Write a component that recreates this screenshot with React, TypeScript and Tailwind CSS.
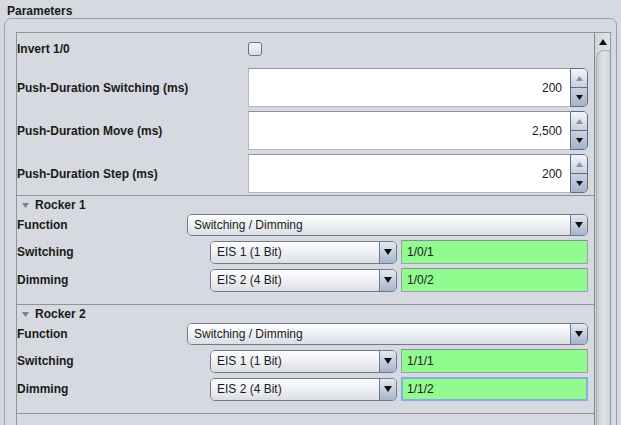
import React from 'react';

const font = { fontFamily: '"Liberation Sans", Arial, sans-serif' };

const Spinner: React.FC<{ value: string }> = ({ value }) => (
  <div className="flex h-[39px] w-[340px]">
    <div className="flex-1 flex items-center justify-end pr-[8px] bg-white border border-[#b3b8c0] border-t-[#8c929c] border-r-0 text-[12px] text-[#1a1a1a]">
      {value}
    </div>
    <div className="w-[18px] flex flex-col rounded-r-[5px] border border-[#5b6b85] overflow-hidden">
      <div className="flex-1 flex items-center justify-center bg-gradient-to-b from-[#f2f5f8] to-[#c7d1dd] border-b border-[#5b6b85]">
        <svg width="7" height="5" viewBox="0 0 7 5"><path d="M3.5 0L7 5H0z" fill="#8a93a0" /></svg>
      </div>
      <div className="flex-1 flex items-center justify-center bg-gradient-to-b from-[#c9d3df] to-[#a3b4ca]">
        <svg width="7" height="5" viewBox="0 0 7 5"><path d="M0 0H7L3.5 5z" fill="#111" /></svg>
      </div>
    </div>
  </div>
);

const Combo: React.FC<{ text: string; className: string }> = ({ text, className }) => (
  <div className={`flex rounded-[5px] border border-[#6f7a8c] overflow-hidden ${className}`}>
    <div className="flex-1 flex items-center pl-[6px] bg-gradient-to-b from-[#fdfdfd] via-[#eef0f3] to-[#dadde3] text-[12px] text-[#1a1a1a]">
      {text}
    </div>
    <div className="w-[17px] flex items-center justify-center border-l border-[#6f7a8c] bg-gradient-to-b from-[#e4eaf1] to-[#a4b5cb]">
      <svg width="8" height="6" viewBox="0 0 8 6"><path d="M0 0H8L4 6z" fill="#111" /></svg>
    </div>
  </div>
);

const Field: React.FC<{ text: string; focus?: boolean }> = ({ text, focus }) => (
  <div
    className={`w-[187px] h-[24px] flex items-center bg-[#92fb8f] text-[12px] text-[#1a1a1a] ${
      focus ? 'border-2 border-[#88acdb] pl-[4px]' : 'border border-[#9da2a9] border-t-[#8a8f97] pl-[5px]'
    }`}
  >
    {text}
  </div>
);

const Rocker: React.FC<{ name: string; sw: string; dim: string; focusLast?: boolean }> = ({ name, sw, dim, focusLast }) => (
  <div className="border-t border-[#8d929b] pb-[12px]">
    <div className="h-[18px] flex items-center pl-[5px] gap-[6px] text-[12px] font-bold text-[#1a1a1a]">
      <svg width="7" height="5" viewBox="0 0 7 5"><path d="M0 0H7L3.5 5z" fill="#7b818b" /></svg>
      {name}
    </div>
    <div className="flex items-center h-[22px]">
      <span className="w-[170px] text-[12px] font-bold">Function</span>
      <Combo text="Switching / Dimming" className="h-[22px] w-[401px]" />
    </div>
    <div className="flex items-center h-[24px] mt-[4px]">
      <span className="w-[193px] text-[12px] font-bold">Switching</span>
      <Combo text="EIS 1 (1 Bit)" className="h-[23px] w-[187px]" />
      <div className="ml-[4px]"><Field text={sw} /></div>
    </div>
    <div className="flex items-center h-[24px] mt-[4px]">
      <span className="w-[193px] text-[12px] font-bold">Dimming</span>
      <Combo text="EIS 2 (4 Bit)" className="h-[23px] w-[187px]" />
      <div className="ml-[4px]"><Field text={dim} focus={focusLast} /></div>
    </div>
  </div>
);

export default function App() {
  return (
    <div className="w-[621px] h-[425px] bg-[#d6d9df] overflow-hidden text-[#1a1a1a]" style={font}>
      <div className="h-[18px] pl-[7px] pt-[2px] text-[12px] font-bold">Parameters</div>
      <div className="ml-[4px] mr-[4px] h-[420px] border border-[#9aa0aa] rounded-t-[7px] pl-[11px] pr-[5px] pt-[13px]">
        <div className="flex h-[400px] border border-[#8f959f] bg-[#d6d9df]">
          <div className="flex-1 overflow-hidden">
            {/* top parameters */}
            <div className="pt-[9px]">
              <div className="flex items-center h-[14px]">
                <span className="w-[231px] text-[12px] font-bold">Invert 1/0</span>
                <div className="w-[14px] h-[14px] rounded-[3px] border border-[#6d7480] bg-gradient-to-b from-[#f7f8fa] to-[#d9dde3]" />
              </div>
              <div className="flex items-center mt-[12px]">
                <span className="w-[231px] text-[12px] font-bold">Push-Duration Switching (ms)</span>
                <Spinner value="200" />
              </div>
              <div className="flex items-center mt-[4px]">
                <span className="w-[231px] text-[12px] font-bold">Push-Duration Move (ms)</span>
                <Spinner value="2,500" />
              </div>
              <div className="flex items-center mt-[4px]">
                <span className="w-[231px] text-[12px] font-bold">Push-Duration Step (ms)</span>
                <Spinner value="200" />
              </div>
            </div>
            <div className="mt-[2px]">
              <Rocker name="Rocker 1" sw="1/0/1" dim="1/0/2" />
              <Rocker name="Rocker 2" sw="1/1/1" dim="1/1/2" focusLast />
              <div className="border-t border-[#8d929b]" />
            </div>
          </div>
          {/* scrollbar */}
          <div className="w-[16px] flex flex-col border-l border-[#7e8591] bg-gradient-to-r from-[#d2d5db] to-[#e2e4e8]">
            <div className="h-[17px] flex items-center justify-center">
              <svg width="8" height="6" viewBox="0 0 8 6"><path d="M4 0L8 6H0z" fill="#111" /></svg>
            </div>
            <div className="flex-1 ml-[1px] rounded-tl-[8px] border-t border-l border-[#a7adb6] bg-gradient-to-r from-[#c9cdd4] via-[#dfe2e6] to-[#d0d4da]" />
          </div>
        </div>
      </div>
    </div>
  );
}
